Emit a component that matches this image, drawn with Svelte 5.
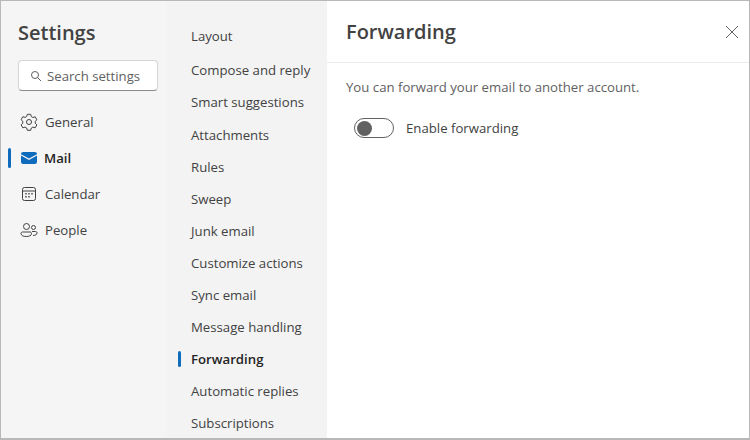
<script>
  const mainNav = ["Layout", "Compose and reply", "Smart suggestions", "Attachments", "Rules", "Sweep", "Junk email", "Customize actions", "Sync email", "Message handling", "Forwarding", "Automatic replies", "Subscriptions"];
</script>

<div class="window">
  <aside class="settings">
    <h1>Settings</h1>
    <div class="search">
      <svg viewBox="0 0 12 12" width="12" height="12" fill="none" stroke="#616161" stroke-width="1">
        <circle cx="5" cy="5" r="3.500" />
        <path d="M7.500 7.500 11 11" />
      </svg>
      <span>Search settings</span>
    </div>
    <nav class="apps">
      <div class="app">
        <svg viewBox="0 0 20 20" width="20" height="20" fill="none" stroke="#424242" stroke-width="1">
          <path d="M8.300 2.300h3.400l.6 2.300 1.600.9 2.300-.7 1.700 3-1.700 1.600v1.800l1.700 1.600-1.700 3-2.300-.7-1.600.9-.6 2.300H8.300l-.6-2.300-1.600-.9-2.300.7-1.700-3 1.700-1.600V9.300L2.100 7.700l1.700-3 2.300.7 1.600-.9z" stroke-linejoin="round" />
          <circle cx="10" cy="10" r="2.500" />
        </svg>
        <span>General</span>
      </div>
      <div class="app active">
        <svg viewBox="0 0 20 20" width="20" height="20">
          <path fill="#0f6cbd" d="M2 6.200C2 4.700 3 4 4.200 4h11.600C17 4 18 4.700 18 6.200L10 10.600z" />
          <path fill="#0f6cbd" d="M2 7.600v6.200C2 15.200 3 16 4.200 16h11.600c1.200 0 2.200-.8 2.200-2.200V7.600l-8 4.400z" />
        </svg>
        <span>Mail</span>
      </div>
      <div class="app">
        <svg viewBox="0 0 20 20" width="20" height="20" fill="none" stroke="#424242" stroke-width="1">
          <rect x="3.500" y="3.500" width="13" height="13" rx="2" />
          <path d="M3.500 7h13" />
          <path stroke="#424242" stroke-width="1.400" d="M6.300 9.700h1.400M9.300 9.700h1.400M12.300 9.700h1.400M6.300 12.700h1.400M9.300 12.700h1.400" />
        </svg>
        <span>Calendar</span>
      </div>
      <div class="app">
        <svg viewBox="0 0 20 20" width="20" height="20" fill="none" stroke="#424242" stroke-width="1">
          <circle cx="7.500" cy="6.500" r="3" />
          <circle cx="14.500" cy="7.500" r="2" />
          <path d="M2 13.500c0-1 .7-1.500 1.500-1.500h7.500c.8 0 1.500.5 1.500 1.500 0 2-2.200 3-5.200 3S2 15.500 2 13.500z" />
          <path d="M13 11.500h3.500c.8 0 1.500.5 1.500 1.500 0 1.500-1.500 2.500-4 2.500" />
        </svg>
        <span>People</span>
      </div>
    </nav>
  </aside>

  <nav class="sections">
    {#each mainNav as item}
      <div class="section" class:active={item === "Forwarding"}>{item}</div>
    {/each}
  </nav>

  <main>
    <header>
      <h2>Forwarding</h2>
      <svg class="close" viewBox="0 0 14 14" width="14" height="14" stroke="#616161" stroke-width="1">
        <path d="M1 1l12 12M13 1 1 13" />
      </svg>
    </header>
    <div class="content">
      <p>You can forward your email to another account.</p>
      <div class="toggle-row">
        <span class="toggle"><span class="knob"></span></span>
        <span class="label">Enable forwarding</span>
      </div>
    </div>
  </main>
</div>

<style>
  :global(body) {
    margin: 0;
    background: #fff;
  }

  .window {
    box-sizing: border-box;
    width: 750px;
    height: 440px;
    display: flex;
    border: 1px solid #b8b8b8;
    border-bottom-width: 2px;
    font-family: "Open Sans", "Noto Sans", sans-serif;
    font-size: 13.2px;
    color: #424242;
    overflow: hidden;
  }

  .settings {
    box-sizing: border-box;
    width: 166px;
    flex: none;
    background: #f5f5f5;
    padding: 17px 0 0 17px;
  }

  h1 {
    margin: 0;
    font-size: 20px;
    line-height: 30px;
    font-weight: 600;
    color: #424242;
  }

  .search {
    box-sizing: border-box;
    width: 140px;
    height: 31px;
    margin-top: 12px;
    display: flex;
    align-items: center;
    gap: 5px;
    padding-left: 11px;
    background: #fff;
    border: 1px solid #d4d4d4;
    border-bottom-color: #8a8a8a;
    border-radius: 4px;
    color: #616161;
  }

  .apps {
    margin-top: 13px;
  }

  .app {
    position: relative;
    height: 36px;
    display: flex;
    align-items: center;
    gap: 6px;
    padding-left: 1px;
    color: #424242;
  }

  .app.active {
    font-weight: 600;
    color: #242424;
    gap: 5px;
  }

  .app.active::before, .section.active::before {
    content: "";
    position: absolute;
    top: 8px;
    bottom: 8px;
    width: 3px;
    border-radius: 2px;
    background: #0f6cbd;
  }

  .app.active::before {
    left: -10px;
  }

  .sections {
    box-sizing: border-box;
    width: 160px;
    flex: none;
    background: #f3f3f3;
    padding: 19px 0 0 24px;
  }

  .section {
    position: relative;
    height: 32px;
    line-height: 32px;
    white-space: nowrap;
  }

  .section:first-child {
    height: 34px;
  }

  .section:nth-child(3) {
    height: 33px;
  }

  .section.active {
    font-weight: 600;
    color: #242424;
  }

  .section.active::before {
    left: -13px;
  }

  main {
    flex: 1;
    min-width: 0;
    background: #fff;
  }

  header {
    height: 62px;
    box-sizing: border-box;
    display: flex;
    align-items: center;
    justify-content: space-between;
    padding: 0 10px 0 19px;
    border-bottom: 1px solid #ececec;
  }

  h2 {
    margin: 0;
    font-size: 20px;
    font-weight: 600;
    color: #424242;
  }

  .content {
    padding: 14px 19px;
  }

  p {
    margin: 0;
    line-height: 20px;
    color: #616161;
  }

  .toggle-row {
    margin-top: 21px;
    display: flex;
    align-items: center;
    gap: 12px;
    padding-left: 8px;
    height: 20px;
  }

  .toggle {
    box-sizing: border-box;
    width: 40px;
    height: 20px;
    display: flex;
    align-items: center;
    padding-left: 2px;
    border: 1px solid #616161;
    border-radius: 10px;
    background: #fff;
  }

  .knob {
    width: 15px;
    height: 15px;
    border-radius: 50%;
    background: #616161;
  }
</style>
